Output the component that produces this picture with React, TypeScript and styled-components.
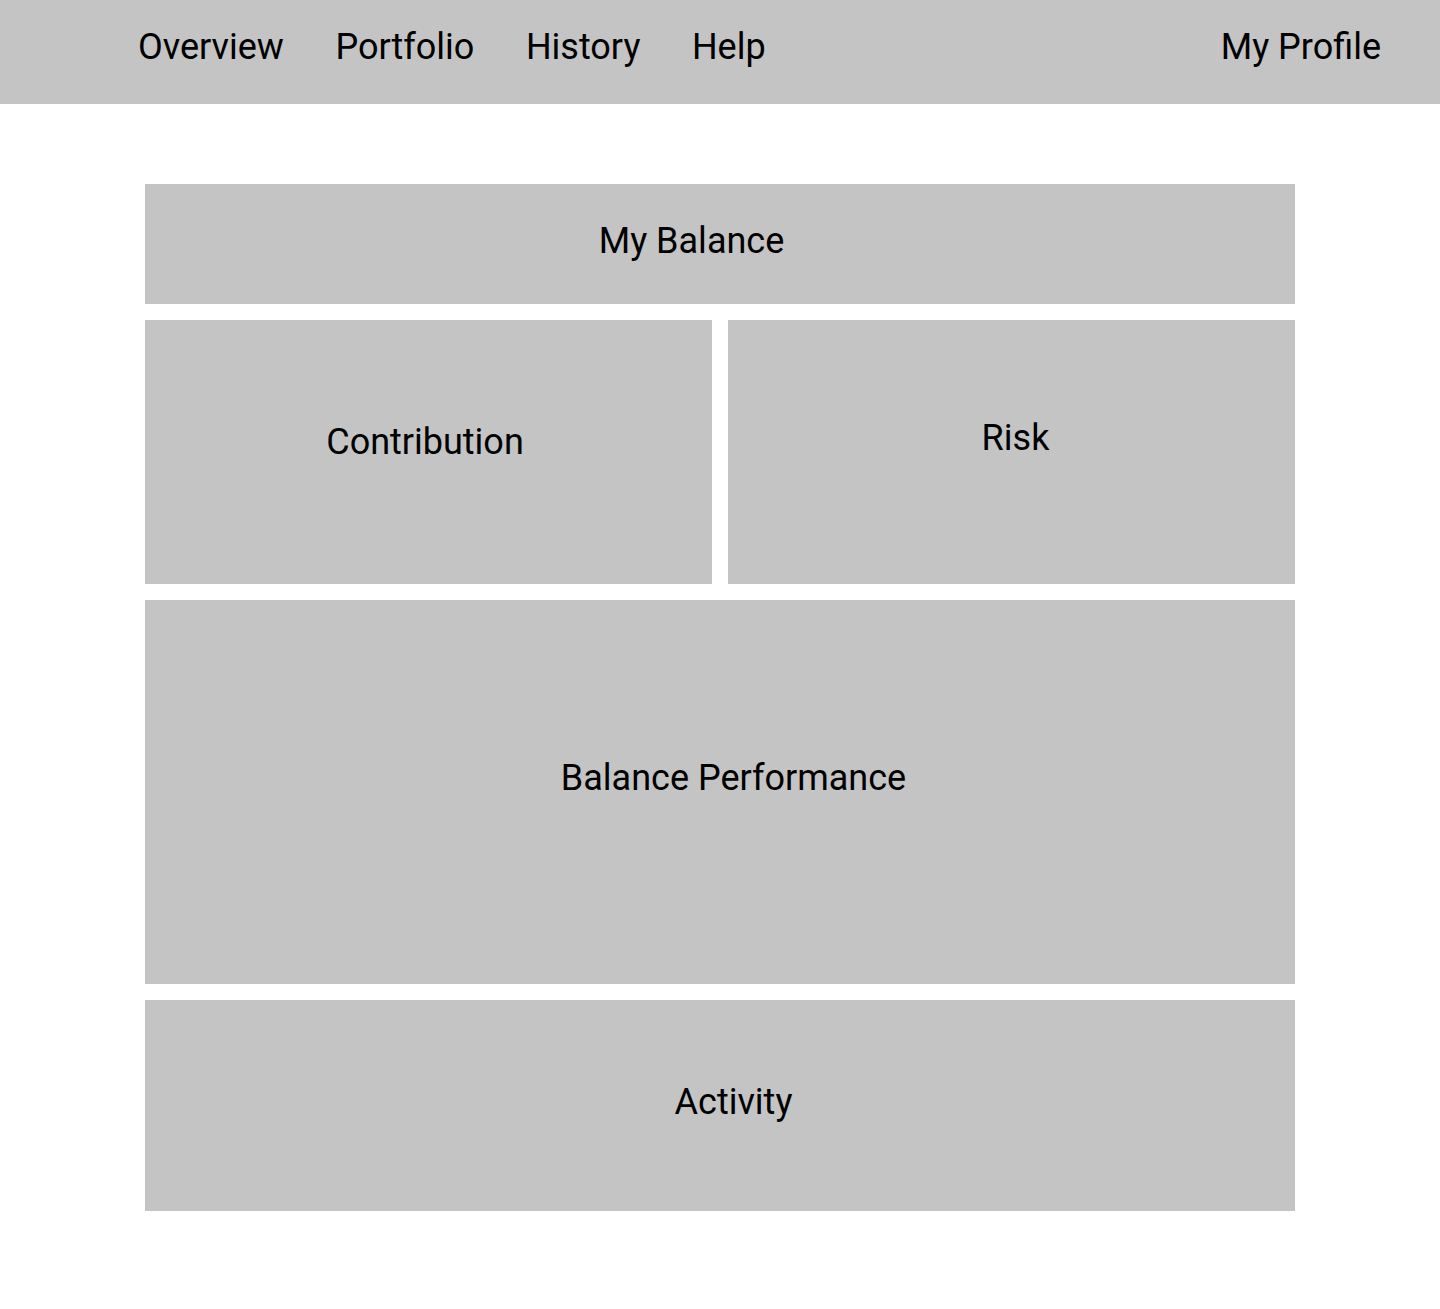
import React from 'react'
import styled, { createGlobalStyle } from 'styled-components'

const GlobalStyle = createGlobalStyle`
  body {
    margin: 0;
    background: #ffffff;
    font-family: Roboto, 'Liberation Sans', sans-serif;
    color: #000000;
  }
`

const Header = styled.header`
  box-sizing: border-box;
  height: 104px;
  background: #c4c4c4;
  display: flex;
  justify-content: space-between;
  align-items: flex-start;
  padding: 26px 59px 0 138px;
`

const Nav = styled.nav`
  display: flex;
  gap: 51.5px;
`

const NavLink = styled.a`
  font-size: 36px;
  color: #000000;
  text-decoration: none;
  cursor: pointer;
`

const Main = styled.main`
  width: 1150px;
  margin: 80px auto 0;
  padding-bottom: 98px;
  display: flex;
  flex-direction: column;
  gap: 16px;
`

const Row = styled.div`
  display: grid;
  grid-template-columns: 1fr 1fr;
  gap: 16px;
`

interface CardProps {
  $height: number
  $pl?: number
  $pr?: number
  $pb?: number
}

const Card = styled.section<CardProps>`
  box-sizing: border-box;
  height: ${({ $height }) => $height}px;
  background: #c4c4c4;
  display: flex;
  align-items: center;
  justify-content: center;
  padding: 0 ${({ $pr }) => $pr || 0}px ${({ $pb }) => $pb || 0}px ${({ $pl }) => $pl || 0}px;
`

const CardTitle = styled.h2`
  margin: 0;
  font-size: 36px;
  font-weight: 400;
  line-height: normal;
`

const navItems = ['Overview', 'Portfolio', 'History', 'Help']

const App: React.FC = () => {
  return (
    <>
      <GlobalStyle />
      <Header>
        <Nav>
          {navItems.map((item) => (
            <NavLink key={item}>{item}</NavLink>
          ))}
        </Nav>
        <NavLink>My Profile</NavLink>
      </Header>
      <Main>
        <Card $height={120} $pr={57} $pb={6}>
          <CardTitle>My Balance</CardTitle>
        </Card>
        <Row>
          <Card $height={264} $pr={7} $pb={20}>
            <CardTitle>Contribution</CardTitle>
          </Card>
          <Card $height={264} $pl={8} $pb={28}>
            <CardTitle>Risk</CardTitle>
          </Card>
        </Row>
        <Card $height={384} $pl={27} $pb={28}>
          <CardTitle>Balance Performance</CardTitle>
        </Card>
        <Card $height={211} $pl={27} $pb={8}>
          <CardTitle>Activity</CardTitle>
        </Card>
      </Main>
    </>
  )
}

export default App
